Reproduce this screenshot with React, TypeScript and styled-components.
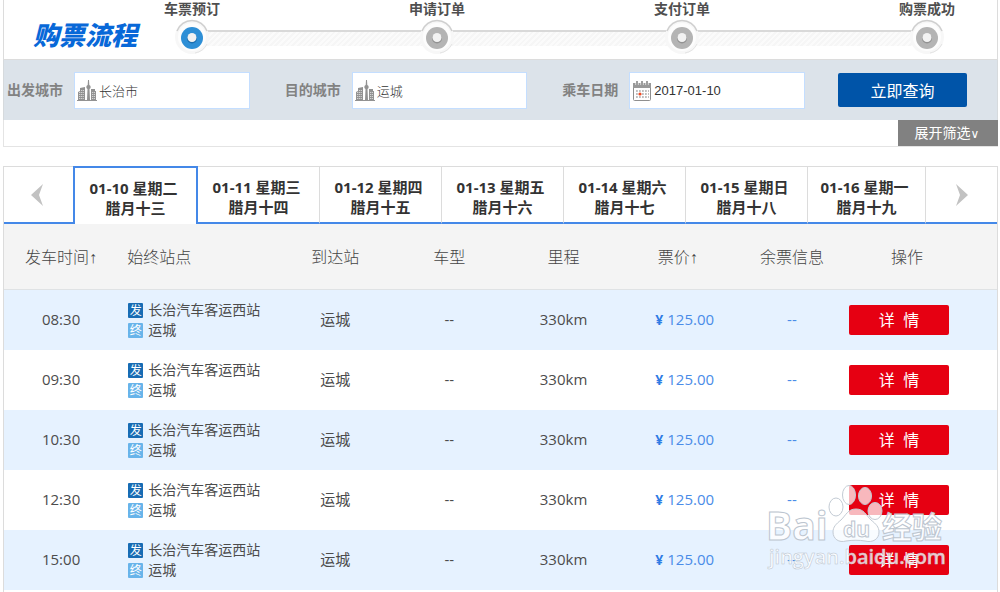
import React from "react";
import styled, { createGlobalStyle } from "styled-components";

const GlobalStyle = createGlobalStyle`
  * { box-sizing: border-box; }
  body {
    margin: 0;
    background: #fff;
    color: #4c4c4c;
    font-family: "Open Sans", "Noto Sans CJK SC", sans-serif;
    font-size: 15px;
    line-height: 20px;
  }
  button, input { font-family: inherit; margin: 0; }
`;

const Page = styled.main`
  position: relative;
  display: flex;
  flex-direction: column;
  min-height: 100vh;
  padding: 0 2px 0 3px;
  overflow: hidden;
`;

const Process = styled.header`
  display: flex;
  height: 60px;
  padding: 0 41px 0 29px;
  border: solid #dcdcdc;
  border-width: 0 1px 1px;
`;

const ProcessTitle = styled.h1`
  width: 130px;
  margin: 20px 0 0;
  color: #0868d8;
  font-size: 26px;
  line-height: 30px;
  font-style: italic;
  font-weight: 900;
  white-space: nowrap;
`;

const Steps = styled.ol`
  position: relative;
  display: flex;
  flex: 1;
  justify-content: space-between;
  margin: 0;
  padding: 0;
  list-style: none;
  &::before {
    content: "";
    position: absolute;
    top: 30px;
    left: 40px;
    right: 40px;
    height: 14px;
    border-top: 2px solid #d9d9d9;
    background: repeating-linear-gradient(135deg, #f6f6f6 0 2px, #fbfbfb 2px 4px);
  }
`;

const Step = styled.li`
  position: relative;
  display: flex;
  flex-direction: column;
  align-items: center;
  width: 58px;
  color: #4f4f4f;
  font-size: 14px;
  line-height: 18px;
  font-weight: 700;
  svg { display: block; }
`;

const SearchForm = styled.form`
  display: flex;
  align-items: center;
  gap: 33px;
  height: 60px;
  padding: 0 30px 0 3px;
  background: #dce3ea;
  border: solid #d6dadd;
  border-width: 0 1px;
`;

const Fields = styled.div`
  display: flex;
  flex: 1;
  gap: 35px;
  min-width: 0;
`;

const Field = styled.label`
  display: flex;
  flex: 1 1 0;
  align-items: center;
  gap: 11px;
  min-width: 0;
  color: #828282;
  font-size: 14px;
  font-weight: 700;
  white-space: nowrap;
`;

const InputBox = styled.span`
  display: flex;
  flex: 1;
  align-items: center;
  gap: 2px;
  min-width: 0;
  height: 37px;
  padding: 2px 0 0 2px;
  background: #fff;
  border: 1px solid #c4deff;
  svg { flex: none; }
`;

const TextInput = styled.input`
  flex: 1;
  width: 100%;
  min-width: 0;
  padding: 0 0 2px;
  border: 0;
  outline: 0;
  background: none;
  color: #333;
  font-family: "Liberation Sans", "Noto Sans CJK SC", sans-serif;
  font-size: 13px;
  font-weight: 300;
`;

const QueryButton = styled.button`
  flex: none;
  width: 129px;
  height: 34px;
  padding: 0;
  border: 0;
  border-radius: 2px;
  background: #0054a8;
  color: #fff;
  font-size: 16px;
`;

const FilterBar = styled.div`
  display: flex;
  justify-content: flex-end;
  height: 27px;
  border: solid #e4e4e4;
  border-width: 0 0 1px 1px;
`;

const FilterButton = styled.button`
  width: 100px;
  padding: 0 2px 2px 0;
  border: 0;
  background: #818181;
  color: #fff;
  font-size: 14px;
  small {
    font-family: "DejaVu Sans", sans-serif;
    font-size: 12px;
  }
`;

const Results = styled.section`
  flex: 1;
  margin-top: 19px;
  border: solid #dcdcdc;
  border-width: 1px 1px 0;
`;

const DateBar = styled.nav`
  display: grid;
  grid-template-columns: 69fr 125fr repeat(5, 122fr) 118fr 71fr;
  height: 58px;
  margin-top: -1px;
`;

const Arrow = styled.button<{ $prev?: boolean }>`
  display: flex;
  align-items: center;
  justify-content: center;
  padding: ${(p) => (p.$prev ? "0 4px 0 0" : "0")};
  border: solid #dcdcdc;
  border-width: 1px 0 0;
  border-bottom: 2px solid #4488e8;
  background: #fff;
`;

const DateTab = styled.button<{ $active?: boolean }>`
  padding: ${(p) => (p.$active ? "4px 0 0" : "5px 0 0")};
  border: solid;
  border-width: ${(p) => (p.$active ? "2px 2px 0" : "1px 1px 2px 0")};
  border-color: ${(p) => (p.$active ? "#4488e8" : "#dcdcdc #dcdcdc #4488e8")};
  background: #fff;
  color: #333;
  font-size: 15px;
  line-height: 20px;
  font-weight: 700;
  white-space: nowrap;
  span { display: block; }
  span:first-child { padding-right: 4px; }
`;

const Table = styled.table`
  width: 100%;
  table-layout: fixed;
  border-collapse: collapse;
`;

const Col = styled.col<{ $w: number }>`
  width: ${(p) => p.$w}%;
`;

const HeadCell = styled.th<{ $left?: boolean; $last?: boolean }>`
  height: 66px;
  padding: ${(p) => (p.$left ? "0 0 0 9px" : p.$last ? "0 32px 0 0" : "0")};
  background: #f4f4f4;
  box-shadow: inset 0 -1px #dfe2e4;
  color: #444;
  font-size: 16px;
  font-weight: 300;
  text-align: ${(p) => (p.$left ? "left" : "center")};
  white-space: nowrap;
  small {
    font-family: "Liberation Sans", sans-serif;
    font-size: 16px;
  }
`;

const Row = styled.tr`
  height: 60px;
  background: #fff;
  &:nth-child(odd) { background: #e6f2ff; }
`;

const cellPadding = { stations: "0 0 0 10px", price: "0 0 2px 14px", seats: "0 0 2px", action: "0" };

const Cell = styled.td<{ $kind?: keyof typeof cellPadding }>`
  padding: ${(p) => (p.$kind ? cellPadding[p.$kind] : "0 0 2px")};
  color: ${(p) => (p.$kind === "price" || p.$kind === "seats" ? "#4a8ce8" : "inherit")};
  text-align: ${(p) => (p.$kind === "stations" || p.$kind === "action" ? "left" : "center")};
  white-space: nowrap;
  b { font-size: 14px; line-height: 18px; color: #2f7be4; }
`;

const Station = styled.div`
  display: flex;
  align-items: center;
  gap: 5px;
  height: 20px;
  font-size: 14px;
`;

const Badge = styled.span<{ $end?: boolean }>`
  width: 15px;
  height: 15px;
  border-radius: 1px;
  background: ${(p) => (p.$end ? "#68b4ea" : "#176cb4")};
  color: #fff;
  font-size: 12px;
  line-height: 15px;
  text-align: center;
`;

const DetailButton = styled.button`
  display: block;
  width: 100px;
  height: 30px;
  padding: 0 0 2px;
  border: 0;
  border-radius: 2px;
  background: #e60012;
  color: #fff;
  font-size: 16px;
`;

const Watermark = styled.svg`
  position: absolute;
  top: 480px;
  right: 52px;
  pointer-events: none;
`;

function StepDot({ active }: { active?: boolean }) {
  return (
    <svg width="38" height="38" viewBox="0 0 38 38" aria-hidden="true">
      <circle cx="19" cy="19" r="17" fill="#f7f7f7" />
      <path d="M4 13A16 16 0 0 1 34 13" fill="none" stroke="#cfcfcf" strokeWidth="1.5" />
      <path d="M34 26A16.5 16.5 0 0 1 22 35" fill="none" stroke="#e4e4e4" />
      <circle cx="19" cy="19" r="14" fill="#fdfdfd" />
      <circle cx="19" cy="20" r="11" fill={active ? "#2e8fd6" : "#b4b4b4"} />
      <circle cx="19" cy="20.5" r="5" fill={active ? "#1c6fb0" : "#939393"} />
      <circle cx="19" cy="19.5" r="4.5" fill="#f2f2f2" />
    </svg>
  );
}

function CityIcon() {
  return (
    <svg width="20" height="22" viewBox="0 0 20 22" aria-hidden="true">
      <path d="M0 20h20v1H0zM1 12l2-1V8l5-1v13H1zM14 9h4v2h1v9h-5zM11 0h1l.3 5a2.2 2.2 0 0 1 .2 4l.5 11H10l.5-11a2.2 2.2 0 0 1 .2-4z" fill="#929292" />
      <path d="M2 12.5h5M2 14.5h5M2 16.5h5M2 18.5h5M4 10.5h3M15 12.5h3M15 14.5h3M15 16.5h3M15 18.5h3" stroke="#e4e4e4" strokeWidth=".8" strokeDasharray="1.2 .6" />
    </svg>
  );
}

function CalendarIcon() {
  return (
    <svg width="20" height="20" viewBox="0 0 20 20" aria-hidden="true">
      <rect x="1.5" y="2.5" width="17" height="17" rx="1" fill="#fff" stroke="#8f8f8f" />
      <path d="M1 2h18v5H1z" fill="#999" />
      <path d="M5 0v4M10 0v4M15 0v4" stroke="#fff" strokeWidth="3" />
      <path d="M5 0v4M10 0v4M15 0v4" stroke="#888" strokeWidth="1.6" />
      <path d="M4 10h13M4 13h13M4 16h13" stroke="#aaa" strokeWidth="1.6" strokeDasharray="1.8 1.2" />
      <circle cx="8" cy="13" r="1.6" fill="#f04a24" />
    </svg>
  );
}

function Chevron({ right }: { right?: boolean }) {
  return (
    <svg width="12" height="22" viewBox="0 0 12 22" aria-hidden="true">
      <path d={right ? "M0 0 12 11 0 22 4 11z" : "M12 0 0 11 12 22 8 11z"} fill="#c2c2c2" />
    </svg>
  );
}

const steps = ["车票预订", "申请订单", "支付订单", "购票成功"];
const dates = [
  ["01-10 星期二", "腊月十三"],
  ["01-11 星期三", "腊月十四"],
  ["01-12 星期四", "腊月十五"],
  ["01-13 星期五", "腊月十六"],
  ["01-14 星期六", "腊月十七"],
  ["01-15 星期日", "腊月十八"],
  ["01-16 星期一", "腊月十九"],
];
const widths = [11.5, 16.1, 11.5, 11.5, 11.5, 11.5, 11.5, 14.9];
const times = ["08:30", "09:30", "10:30", "12:30", "15:00"];

export default function App() {
  return (
    <Page>
      <GlobalStyle />
      <Process>
        <ProcessTitle>购票流程</ProcessTitle>
        <Steps>
          {steps.map((s, i) => (
            <Step key={s}>
              {s}
              <StepDot active={i === 0} />
            </Step>
          ))}
        </Steps>
      </Process>
      <SearchForm onSubmit={(e) => e.preventDefault()}>
        <Fields>
          <Field>
            出发城市
            <InputBox><CityIcon /><TextInput defaultValue="长治市" /></InputBox>
          </Field>
          <Field>
            目的城市
            <InputBox><CityIcon /><TextInput defaultValue="运城" /></InputBox>
          </Field>
          <Field>
            乘车日期
            <InputBox><CalendarIcon /><TextInput defaultValue="2017-01-10" /></InputBox>
          </Field>
        </Fields>
        <QueryButton>立即查询</QueryButton>
      </SearchForm>
      <FilterBar>
        <FilterButton type="button">展开筛选<small>∨</small></FilterButton>
      </FilterBar>
      <Results>
        <DateBar>
          <Arrow $prev aria-label="前一周"><Chevron /></Arrow>
          {dates.map(([day, lunar], i) => (
            <DateTab key={day} $active={i === 0}>
              <span>{day}</span>
              <span>{lunar}</span>
            </DateTab>
          ))}
          <Arrow aria-label="后一周"><Chevron right /></Arrow>
        </DateBar>
        <Table>
          <colgroup>
            {widths.map((w, i) => <Col key={i} $w={w} />)}
          </colgroup>
          <thead>
            <tr>
              <HeadCell>发车时间<small>↑</small></HeadCell>
              <HeadCell $left>始终站点</HeadCell>
              <HeadCell>到达站</HeadCell>
              <HeadCell>车型</HeadCell>
              <HeadCell>里程</HeadCell>
              <HeadCell>票价<small>↑</small></HeadCell>
              <HeadCell>余票信息</HeadCell>
              <HeadCell $last>操作</HeadCell>
            </tr>
          </thead>
          <tbody>
            {times.map((t) => (
              <Row key={t}>
                <Cell>{t}</Cell>
                <Cell $kind="stations">
                  <Station><Badge>发</Badge>长治汽车客运西站</Station>
                  <Station><Badge $end>终</Badge>运城</Station>
                </Cell>
                <Cell>运城</Cell>
                <Cell>--</Cell>
                <Cell>330km</Cell>
                <Cell $kind="price"><b>¥</b> 125.00</Cell>
                <Cell $kind="seats">--</Cell>
                <Cell $kind="action"><DetailButton>详&nbsp;&nbsp;情</DetailButton></Cell>
              </Row>
            ))}
          </tbody>
        </Table>
      </Results>
      <Watermark width="193" height="95" viewBox="0 0 193 95" aria-hidden="true">
        <g fill="#fff" fillOpacity=".72" stroke="#c3cbd4" strokeWidth="1">
          <ellipse cx="81" cy="27" rx="7" ry="9" />
          <ellipse cx="94" cy="15" rx="6.5" ry="9.5" />
          <ellipse cx="110" cy="16" rx="6.5" ry="8.5" />
          <ellipse cx="120" cy="31" rx="7" ry="8.5" />
          <path d="M101 29c-8 0-10 6-15 11-5 4-8 7-8 12 0 7 6 11 13 9 7-1 13-1 19 0 8 2 14-2 14-9 0-5-3-8-8-12-5-5-7-11-15-11z" />
        </g>
        <g stroke="#bcc5cf" strokeWidth="1" fill="#fff" fillOpacity=".85" fontFamily="Open Sans, Noto Sans CJK SC, sans-serif" fontWeight="700">
          <text x="11" y="60" fontSize="39">Bai</text>
          <text x="88" y="57" fontSize="21">du</text>
          <text x="127" y="58" fontSize="30">经验</text>
        </g>
        <text x="14" y="84" fontSize="20" fontWeight="600" fontFamily="Open Sans, sans-serif" fill="#fff" fillOpacity=".8" stroke="#b9c3cd" strokeWidth=".5">jingyan.baidu.com</text>
      </Watermark>
    </Page>
  );
}
